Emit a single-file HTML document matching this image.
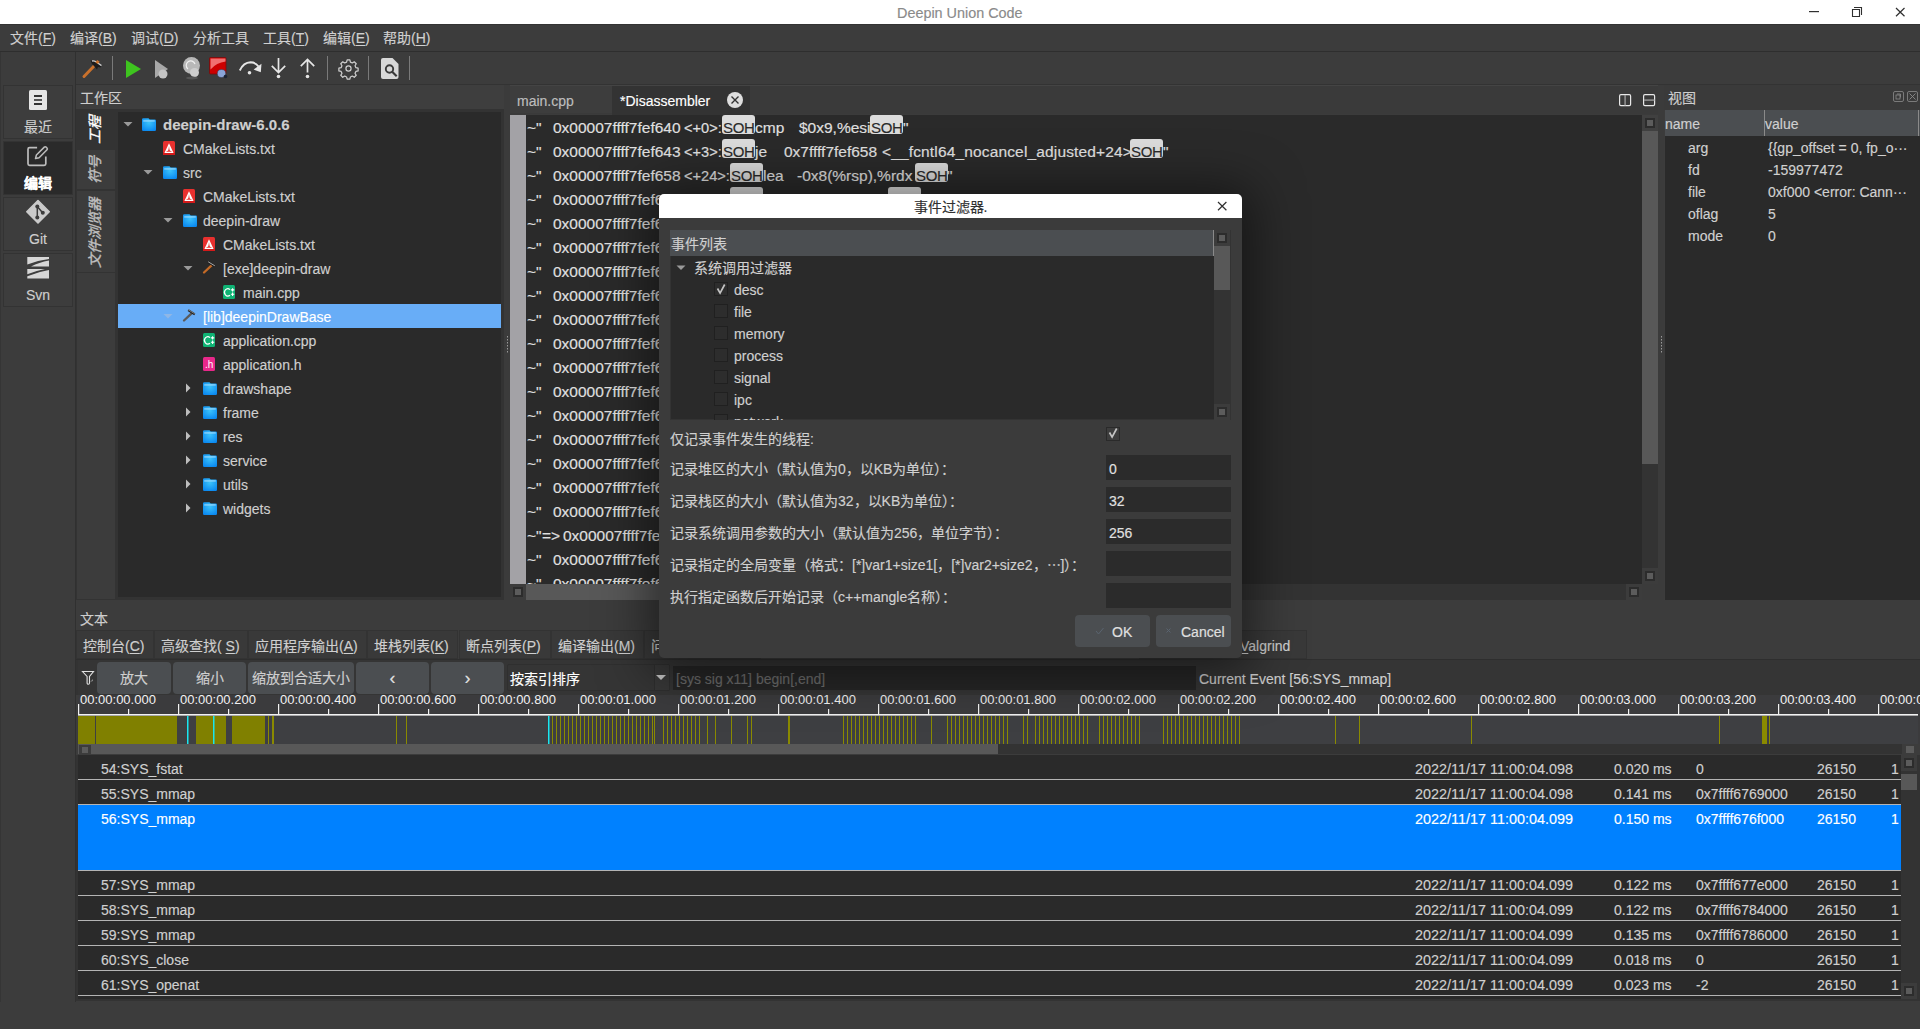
<!DOCTYPE html><html lang="zh-CN"><head><meta charset="utf-8"><style>
*{margin:0;padding:0;box-sizing:border-box}
html,body{width:1920px;height:1029px;overflow:hidden}
body{position:relative;background:#3c3c3c;font-family:"Liberation Sans",sans-serif;font-size:14px;color:#c9c9c9}
div,span{position:absolute}
.t{white-space:pre;line-height:20px;height:20px;-webkit-text-stroke:0.15px currentColor}
.u{text-decoration:underline;text-underline-offset:2px}
svg{position:absolute;overflow:visible}
</style></head><body>
<div style="left:0px;top:0px;width:1920px;height:24px;background:#fff"></div>
<div class="t" style="left:897px;top:3px;color:#8a8a8a;font-size:14.4px">Deepin Union Code</div>
<svg style="left:0;top:0" width="1920" height="24"><rect x="1809" y="11" width="10" height="1.2" fill="#303030"/><path d="M1852.5 9.5h7v7h-7z" fill="none" stroke="#303030" stroke-width="1.1"/><path d="M1854 7.5h7.5v7.5" fill="none" stroke="#303030" stroke-width="1.1"/><path d="M1896 8l8.5 8.3M1904.5 8l-8.5 8.3" stroke="#303030" stroke-width="1.2"/></svg>
<div style="left:0px;top:24px;width:1920px;height:27px;background:#3c3c3c"></div>
<div style="left:0px;top:24px;width:1920px;height:1px;background:#333"></div>
<div style="left:0px;top:51px;width:1920px;height:1px;background:#2e2e2e"></div>
<div class="t" style="left:10px;top:28.299999999999997px;color:#d0d0d0">文件(<span class=u style='position:static'>F</span>)</div>
<div class="t" style="left:70px;top:28.299999999999997px;color:#d0d0d0">编译(<span class=u style='position:static'>B</span>)</div>
<div class="t" style="left:131px;top:28.299999999999997px;color:#d0d0d0">调试(<span class=u style='position:static'>D</span>)</div>
<div class="t" style="left:193px;top:28.299999999999997px;color:#d0d0d0">分析工具</div>
<div class="t" style="left:263px;top:28.299999999999997px;color:#d0d0d0">工具(<span class=u style='position:static'>T</span>)</div>
<div class="t" style="left:323px;top:28.299999999999997px;color:#d0d0d0">编辑(<span class=u style='position:static'>E</span>)</div>
<div class="t" style="left:383px;top:28.299999999999997px;color:#d0d0d0">帮助(<span class=u style='position:static'>H</span>)</div>
<div style="left:0px;top:52px;width:76px;height:977px;background:#3c3c3c"></div>
<div style="left:0px;top:52px;width:1px;height:950px;background:#353535"></div>
<div style="left:75px;top:52px;width:1px;height:950px;background:#303030"></div>
<div style="left:3px;top:85px;width:70px;height:54px;background:#3d3d3d;border:1px solid #333"></div>
<div class="t" style="left:3px;top:117px;width:70px;text-align:center;color:#cfcfcf;">最近</div>
<div style="left:3px;top:141px;width:70px;height:54px;background:#2a2a2a;border:1px solid #333"></div>
<div class="t" style="left:3px;top:173px;width:70px;text-align:center;color:#ffffff;font-weight:bold">编辑</div>
<div style="left:3px;top:197px;width:70px;height:54px;background:#3d3d3d;border:1px solid #333"></div>
<div class="t" style="left:3px;top:229px;width:70px;text-align:center;color:#cfcfcf;">Git</div>
<div style="left:3px;top:253px;width:70px;height:54px;background:#3d3d3d;border:1px solid #333"></div>
<div class="t" style="left:3px;top:285px;width:70px;text-align:center;color:#cfcfcf;">Svn</div>
<svg style="left:0;top:0" width="76" height="320"><rect x="29" y="90" width="18" height="20" rx="1.5" fill="#e6e6e6"/><rect x="34" y="95" width="8" height="2" fill="#333"/><rect x="34" y="99" width="8" height="2" fill="#555"/><rect x="34" y="103" width="8" height="2" fill="#333"/><path d="M45.8 156.5v7.3a1.6 1.6 0 0 1-1.6 1.6h-14.6a1.6 1.6 0 0 1-1.6-1.6v-14.6a1.6 1.6 0 0 1 1.6-1.6h7.5" fill="none" stroke="#bdbdbd" stroke-width="1.7"/><path d="M35.5 158.6l.9-3.6 7.9-7.9a1.3 1.3 0 0 1 1.8 0l.9.9a1.3 1.3 0 0 1 0 1.8l-7.9 7.9z" fill="none" stroke="#bdbdbd" stroke-width="1.5" stroke-linejoin="round"/><path d="M38 200.5l11.2 11.2-11.2 11.2-11.2-11.2z" fill="#cacaca" stroke="#cacaca" stroke-width="1.6" stroke-linejoin="round"/><path d="M37.3 206.5l5.3 6.3M37.3 206.5v11" stroke="#3c3c3c" stroke-width="1.5" fill="none"/><circle cx="37.3" cy="206.5" r="2" fill="#3c3c3c"/><circle cx="42.8" cy="212.8" r="2" fill="#3c3c3c"/><circle cx="37.3" cy="217.5" r="2" fill="#3c3c3c"/><path d="M27.3 257h21.7v2q-11 1-21.7 5.5z" fill="#d6d6d6"/><path d="M31 266.6q8-4.5 18-6.2v6.2z" fill="#d6d6d6"/><path d="M27.3 269h17.7q-9 1.8-17.7 5.2z" fill="#d6d6d6"/><path d="M27.3 278.5v-2.2q11-4.5 21.7-6.2v8.4z" fill="#d6d6d6"/></svg>
<div style="left:76px;top:52px;width:1844px;height:32px;background:#3c3c3c"></div>
<div style="left:76px;top:84px;width:1844px;height:1px;background:#333"></div>
<svg style="left:0;top:0" width="420" height="90"><rect x="112" y="56" width="1" height="24" fill="#7a7a7a"/><rect x="327" y="56" width="1" height="24" fill="#7a7a7a"/><rect x="368" y="56" width="1" height="24" fill="#7a7a7a"/><rect x="409" y="56" width="1" height="24" fill="#7a7a7a"/><path d="M84 76.5l11.5-12" stroke="#c9712c" stroke-width="3" stroke-linecap="round"/><path d="M90.5 60.5q2.5-1 5 .5l6.5 4.5-1.5 2-2.5-.5-1 2.5-3-3.5-2-2z" fill="#1c1c1c"/><path d="M92 61q2-.5 4 .8l5.5 3.8" fill="none" stroke="#cfcfcf" stroke-width="1.3"/><rect x="96" y="60.5" width="3" height="3" fill="#c9712c" transform="rotate(40 97.5 62)"/><path d="M126 60l15 9-15 9z" fill="#3ec41f"/><path d="M155 60l13 9-13 9z" fill="#a8a8a8"/><circle cx="163" cy="74" r="4.5" fill="#c4c4c4"/><circle cx="191.5" cy="65.5" r="8.5" fill="#b8b8b8"/><path d="M188 69a4.5 4.5 0 1 1 7-5" fill="none" stroke="#f0f0f0" stroke-width="1.2"/><ellipse cx="194.5" cy="72.5" rx="4.5" ry="4.5" fill="#cdcdcd"/><ellipse cx="192" cy="78" rx="6" ry="1.5" fill="#555"/><rect x="209.5" y="57.5" width="16.5" height="16.5" rx="1" fill="#cc0000" stroke="#7a0a0a" stroke-width="0.8"/><path d="M210.5 58.5h15v3q-9 1-15 8z" fill="#f07070"/><ellipse cx="221.5" cy="73.5" rx="4.2" ry="4" fill="#8aa4d8" stroke="#334" stroke-width="0.5"/><circle cx="225.5" cy="76.5" r="1.8" fill="#1c2433"/><path d="M239.8 70.5Q243.5 62.5 250.5 62.3Q255.5 62.3 258.5 66.5" fill="none" stroke="#e6e6e6" stroke-width="1.9"/><path d="M261.5 63.8L260.8 72.3 253.6 69.6z" fill="#e6e6e6"/><circle cx="249.5" cy="72.8" r="1.8" fill="#e6e6e6"/><path d="M278.5 58v14M271.8 65.8l6.7 6.7 6.7-6.7" fill="none" stroke="#e6e6e6" stroke-width="1.7"/><circle cx="278.5" cy="76.5" r="1.8" fill="#e6e6e6"/><path d="M307.5 72.5v-13M300.8 66.2l6.7-6.7 6.7 6.7" fill="none" stroke="#e6e6e6" stroke-width="1.7"/><circle cx="307.5" cy="76.5" r="1.8" fill="#e6e6e6"/><g transform="translate(348.5 68.5) scale(0.86)"><path d="M-1.6 -10h3.2l.6 2.6 2.2 1 2.3-1.4 2.3 2.3-1.4 2.3 1 2.2 2.6.6v3.2l-2.6.6-1 2.2 1.4 2.3-2.3 2.3-2.3-1.4-2.2 1-.6 2.6h-3.2l-.6-2.6-2.2-1-2.3 1.4-2.3-2.3 1.4-2.3-1-2.2-2.6-.6v-3.2l2.6-.6 1-2.2-1.4-2.3 2.3-2.3 2.3 1.4 2.2-1z" fill="none" stroke="#d0d0d0" stroke-width="1.4" stroke-linejoin="round"/><circle r="3" fill="none" stroke="#d0d0d0" stroke-width="1.4"/></g><path d="M383 58h9.5l6 6V77a2 2 0 0 1-2 2H383a2 2 0 0 1-2-2V60a2 2 0 0 1 2-2z" fill="#d8d8d8"/><circle cx="389.5" cy="69" r="3.7" fill="none" stroke="#3a3a3a" stroke-width="1.9"/><path d="M392.2 71.7l4.5 4.5" stroke="#3a3a3a" stroke-width="2.1"/></svg>
<div style="left:76px;top:85px;width:428px;height:24px;background:#3e3e3e"></div>
<div class="t" style="left:80px;top:88px;color:#cfcfcf">工作区</div>
<div style="left:76px;top:109px;width:428px;height:491px;background:#333"></div>
<div style="left:77px;top:273px;width:38px;height:326px;background:#3c3c3c"></div>
<div style="left:77px;top:111px;width:38px;height:37px;background:#333"></div>
<div style="left:77px;top:150px;width:38px;height:39px;background:#3c3c3c"></div>
<div style="left:77px;top:191px;width:38px;height:81px;background:#3c3c3c"></div>
<div class="t" style="left:45px;top:120px;width:100px;text-align:center;transform:rotate(-90deg) skewX(-4deg);font-style:italic;-webkit-text-stroke:0.35px #ffffff;color:#ffffff">工程</div>
<div class="t" style="left:45px;top:160px;width:100px;text-align:center;transform:rotate(-90deg) skewX(-4deg);font-style:italic;-webkit-text-stroke:0.35px #c0c0c0;color:#c0c0c0">符号</div>
<div class="t" style="left:45px;top:223px;width:100px;text-align:center;transform:rotate(-90deg) skewX(-4deg);font-style:italic;-webkit-text-stroke:0.35px #c0c0c0;color:#c0c0c0">文件浏览器</div>
<div style="left:118px;top:112px;width:383px;height:485px;background:#2a2a2a"></div>
<div style="left:118px;top:304px;width:383px;height:24px;background:#68adf7"></div>
<div class="t" style="left:163px;top:115px;color:#cfcfcf;font-weight:bold;font-size:15px;">deepin-draw-6.0.6</div>
<div class="t" style="left:183px;top:139px;color:#cfcfcf;">CMakeLists.txt</div>
<div class="t" style="left:183px;top:163px;color:#cfcfcf;">src</div>
<div class="t" style="left:203px;top:187px;color:#cfcfcf;">CMakeLists.txt</div>
<div class="t" style="left:203px;top:211px;color:#cfcfcf;">deepin-draw</div>
<div class="t" style="left:223px;top:235px;color:#cfcfcf;">CMakeLists.txt</div>
<div class="t" style="left:223px;top:259px;color:#cfcfcf;">[exe]deepin-draw</div>
<div class="t" style="left:243px;top:283px;color:#cfcfcf;">main.cpp</div>
<div class="t" style="left:203px;top:307px;color:#ffffff;">[lib]deepinDrawBase</div>
<div class="t" style="left:223px;top:331px;color:#cfcfcf;">application.cpp</div>
<div class="t" style="left:223px;top:355px;color:#cfcfcf;">application.h</div>
<div class="t" style="left:223px;top:379px;color:#cfcfcf;">drawshape</div>
<div class="t" style="left:223px;top:403px;color:#cfcfcf;">frame</div>
<div class="t" style="left:223px;top:427px;color:#cfcfcf;">res</div>
<div class="t" style="left:223px;top:451px;color:#cfcfcf;">service</div>
<div class="t" style="left:223px;top:475px;color:#cfcfcf;">utils</div>
<div class="t" style="left:223px;top:499px;color:#cfcfcf;">widgets</div>
<svg style="left:0;top:0" width="520" height="600"><defs><radialGradient id="fg" cx="50%" cy="35%" r="70%"><stop offset="0" stop-color="#3cc3fa"/><stop offset="1" stop-color="#0a88f0"/></radialGradient></defs><path d="M123.5 122h9l-4.5 4.5z" fill="#9a9a9a"/><path d="M142 119.5a1.3 1.3 0 0 1 1.3-1.3h5.2l1.2 1.2h5a1.3 1.3 0 0 1 1.3 1.3v9a1.3 1.3 0 0 1-1.3 1.3h-11.4a1.3 1.3 0 0 1-1.3-1.3z" fill="url(#fg)"/><rect x="143.2" y="120.5" width="11.6" height="0.9" fill="#bfe8ff"/><rect x="163" y="141" width="12" height="14" rx="1.5" fill="#e8302e"/><rect x="163" y="152.5" width="12" height="2.5" fill="#d41a1a"/><path d="M169 143.3l4.6 9.6h-9.2z" fill="#fff"/><path d="M169 146q.4 3.5 .8 4.5l2.3 1.3h-6.2l2.3-1.3q.4-1 .8-4.5z" fill="#e8302e"/><path d="M143.5 170h9l-4.5 4.5z" fill="#9a9a9a"/><path d="M163 167.5a1.3 1.3 0 0 1 1.3-1.3h5.2l1.2 1.2h5a1.3 1.3 0 0 1 1.3 1.3v9a1.3 1.3 0 0 1-1.3 1.3h-11.4a1.3 1.3 0 0 1-1.3-1.3z" fill="url(#fg)"/><rect x="164.2" y="168.5" width="11.6" height="0.9" fill="#bfe8ff"/><rect x="183" y="189" width="12" height="14" rx="1.5" fill="#e8302e"/><rect x="183" y="200.5" width="12" height="2.5" fill="#d41a1a"/><path d="M189 191.3l4.6 9.6h-9.2z" fill="#fff"/><path d="M189 194q.4 3.5 .8 4.5l2.3 1.3h-6.2l2.3-1.3q.4-1 .8-4.5z" fill="#e8302e"/><path d="M163.5 218h9l-4.5 4.5z" fill="#9a9a9a"/><path d="M183 215.5a1.3 1.3 0 0 1 1.3-1.3h5.2l1.2 1.2h5a1.3 1.3 0 0 1 1.3 1.3v9a1.3 1.3 0 0 1-1.3 1.3h-11.4a1.3 1.3 0 0 1-1.3-1.3z" fill="url(#fg)"/><rect x="184.2" y="216.5" width="11.6" height="0.9" fill="#bfe8ff"/><rect x="203" y="237" width="12" height="14" rx="1.5" fill="#e8302e"/><rect x="203" y="248.5" width="12" height="2.5" fill="#d41a1a"/><path d="M209 239.3l4.6 9.6h-9.2z" fill="#fff"/><path d="M209 242q.4 3.5 .8 4.5l2.3 1.3h-6.2l2.3-1.3q.4-1 .8-4.5z" fill="#e8302e"/><path d="M183.5 266h9l-4.5 4.5z" fill="#9a9a9a"/><path d="M204 272.5l7.6-7.2" stroke="#c46a26" stroke-width="2.3" stroke-linecap="round"/><path d="M208.2 262.2l6.6 4.2" stroke="#1e1e1e" stroke-width="2"/><path d="M208.2 261.8l6.6 4" stroke="#bdbdbd" stroke-width="0.9"/><rect x="223" y="285" width="12" height="14" rx="1.5" fill="#0fb374"/><path d="M230 289.6a3.4 3.6 0 1 0 0 5.6" fill="none" stroke="#fff" stroke-width="1.2"/><path d="M232.6 288.2v3.4M230.9 289.9h3.4M232.6 292.6v3.4M230.9 294.3h3.4" stroke="#fff" stroke-width="1.1"/><path d="M163.5 314h9l-4.5 4.5z" fill="#8fb7e6"/><path d="M184 320.5l7.6-7.2" stroke="#5a5a5a" stroke-width="2.3" stroke-linecap="round"/><path d="M188.2 310.2l6.6 4.2" stroke="#1e1e1e" stroke-width="2"/><path d="M188.2 309.8l6.6 4" stroke="#8a8a8a" stroke-width="0.9"/><rect x="203" y="333" width="12" height="14" rx="1.5" fill="#0fb374"/><path d="M210 337.6a3.4 3.6 0 1 0 0 5.6" fill="none" stroke="#fff" stroke-width="1.2"/><path d="M212.6 336.2v3.4M210.9 337.9h3.4M212.6 340.6v3.4M210.9 342.3h3.4" stroke="#fff" stroke-width="1.1"/><rect x="203" y="357" width="12" height="14" rx="1.5" fill="#e8288a"/><text x="205" y="368" font-family="Liberation Sans" font-size="10" fill="#fff">.h</text><path d="M186 383.5v9l4.5-4.5z" fill="#bdbdbd"/><path d="M203 383.5a1.3 1.3 0 0 1 1.3-1.3h5.2l1.2 1.2h5a1.3 1.3 0 0 1 1.3 1.3v9a1.3 1.3 0 0 1-1.3 1.3h-11.4a1.3 1.3 0 0 1-1.3-1.3z" fill="url(#fg)"/><rect x="204.2" y="384.5" width="11.6" height="0.9" fill="#bfe8ff"/><path d="M186 407.5v9l4.5-4.5z" fill="#bdbdbd"/><path d="M203 407.5a1.3 1.3 0 0 1 1.3-1.3h5.2l1.2 1.2h5a1.3 1.3 0 0 1 1.3 1.3v9a1.3 1.3 0 0 1-1.3 1.3h-11.4a1.3 1.3 0 0 1-1.3-1.3z" fill="url(#fg)"/><rect x="204.2" y="408.5" width="11.6" height="0.9" fill="#bfe8ff"/><path d="M186 431.5v9l4.5-4.5z" fill="#bdbdbd"/><path d="M203 431.5a1.3 1.3 0 0 1 1.3-1.3h5.2l1.2 1.2h5a1.3 1.3 0 0 1 1.3 1.3v9a1.3 1.3 0 0 1-1.3 1.3h-11.4a1.3 1.3 0 0 1-1.3-1.3z" fill="url(#fg)"/><rect x="204.2" y="432.5" width="11.6" height="0.9" fill="#bfe8ff"/><path d="M186 455.5v9l4.5-4.5z" fill="#bdbdbd"/><path d="M203 455.5a1.3 1.3 0 0 1 1.3-1.3h5.2l1.2 1.2h5a1.3 1.3 0 0 1 1.3 1.3v9a1.3 1.3 0 0 1-1.3 1.3h-11.4a1.3 1.3 0 0 1-1.3-1.3z" fill="url(#fg)"/><rect x="204.2" y="456.5" width="11.6" height="0.9" fill="#bfe8ff"/><path d="M186 479.5v9l4.5-4.5z" fill="#bdbdbd"/><path d="M203 479.5a1.3 1.3 0 0 1 1.3-1.3h5.2l1.2 1.2h5a1.3 1.3 0 0 1 1.3 1.3v9a1.3 1.3 0 0 1-1.3 1.3h-11.4a1.3 1.3 0 0 1-1.3-1.3z" fill="url(#fg)"/><rect x="204.2" y="480.5" width="11.6" height="0.9" fill="#bfe8ff"/><path d="M186 503.5v9l4.5-4.5z" fill="#bdbdbd"/><path d="M203 503.5a1.3 1.3 0 0 1 1.3-1.3h5.2l1.2 1.2h5a1.3 1.3 0 0 1 1.3 1.3v9a1.3 1.3 0 0 1-1.3 1.3h-11.4a1.3 1.3 0 0 1-1.3-1.3z" fill="url(#fg)"/><rect x="204.2" y="504.5" width="11.6" height="0.9" fill="#bfe8ff"/></svg>
<div style="left:504px;top:85px;width:1160px;height:515px;background:#3b3b3b"></div>
<div style="left:510px;top:85px;width:1148px;height:29px;background:#3a3a3a;border-top:1px solid #444"></div>
<div style="left:510px;top:86px;width:102px;height:27px;background:#3d3d3d"></div>
<div class="t" style="left:517px;top:91px;color:#bdbdbd">main.cpp</div>
<div style="left:612px;top:86px;width:138px;height:29px;background:#333"></div>
<div class="t" style="left:620px;top:91px;color:#ffffff">*Disassembler</div>
<svg style="left:0;top:0" width="1920" height="120"><circle cx="735" cy="100" r="8" fill="#dedede"/><path d="M731.5 96.5l7 7M738.5 96.5l-7 7" stroke="#333" stroke-width="1.4"/><rect x="1619.6" y="94.6" width="11" height="11" rx="1.3" fill="none" stroke="#e8e8e8" stroke-width="1.2"/><rect x="1624.4" y="95" width="1.4" height="10.5" fill="#9a9a9a"/><rect x="1643.6" y="94.6" width="11" height="11" rx="1.3" fill="none" stroke="#e8e8e8" stroke-width="1.2"/><rect x="1644" y="99.4" width="10.5" height="1.4" fill="#9a9a9a"/></svg>
<div style="left:510px;top:115px;width:1132px;height:469px;background:#2a2a2a;overflow:hidden"></div>
<div style="left:510px;top:115px;width:16px;height:469px;background:#a3a2a6"></div>
<div style="left:1642px;top:115px;width:16px;height:469px;background:#333"></div>
<div style="left:1642px;top:115px;width:16px;height:16px;background:#404040"></div>
<div style="left:1645px;top:118px;width:10px;height:10px;background:#2c2c2c"></div>
<div style="left:1647px;top:120px;width:6px;height:6px;background:#5c5c5c"></div>
<div style="left:1642px;top:131px;width:16px;height:333px;background:#585858"></div>
<div style="left:1642px;top:568px;width:16px;height:16px;background:#3c3c3c"></div>
<div style="left:1645px;top:571px;width:10px;height:10px;background:#2c2c2c"></div>
<div style="left:1647px;top:573px;width:6px;height:6px;background:#5c5c5c"></div>
<div style="left:510px;top:584px;width:1132px;height:16px;background:#333"></div>
<div style="left:510px;top:584px;width:16px;height:16px;background:#3c3c3c"></div>
<div style="left:513px;top:587px;width:10px;height:10px;background:#2c2c2c"></div>
<div style="left:515px;top:589px;width:6px;height:6px;background:#5c5c5c"></div>
<div style="left:526px;top:584px;width:640px;height:16px;background:#585858"></div>
<div style="left:1626px;top:584px;width:16px;height:16px;background:#3c3c3c"></div>
<div style="left:1629px;top:587px;width:10px;height:10px;background:#2c2c2c"></div>
<div style="left:1631px;top:589px;width:6px;height:6px;background:#5c5c5c"></div>
<div style="left:510px;top:115px;width:1132px;height:469px;overflow:hidden"><div style="left:-510px;top:-115px;width:1642px;height:584px"><div class="t" style="left:527px;top:118px;color:#e0e0e0;font-size:15.5px">~"</div><div class="t" style="left:553px;top:118px;color:#e0e0e0;font-size:15.5px">0x00007ffff7fef640</div><div class="t" style="left:527px;top:142px;color:#e0e0e0;font-size:15.5px">~"</div><div class="t" style="left:553px;top:142px;color:#e0e0e0;font-size:15.5px">0x00007ffff7fef643</div><div class="t" style="left:527px;top:166px;color:#e0e0e0;font-size:15.5px">~"</div><div class="t" style="left:553px;top:166px;color:#e0e0e0;font-size:15.5px">0x00007ffff7fef658</div><div class="t" style="left:527px;top:190px;color:#e0e0e0;font-size:15.5px">~"</div><div class="t" style="left:553px;top:190px;color:#e0e0e0;font-size:15.5px">0x00007ffff7fef65b</div><div class="t" style="left:527px;top:214px;color:#e0e0e0;font-size:15.5px">~"</div><div class="t" style="left:553px;top:214px;color:#e0e0e0;font-size:15.5px">0x00007ffff7fef65f</div><div class="t" style="left:527px;top:238px;color:#e0e0e0;font-size:15.5px">~"</div><div class="t" style="left:553px;top:238px;color:#e0e0e0;font-size:15.5px">0x00007ffff7fef663</div><div class="t" style="left:527px;top:262px;color:#e0e0e0;font-size:15.5px">~"</div><div class="t" style="left:553px;top:262px;color:#e0e0e0;font-size:15.5px">0x00007ffff7fef667</div><div class="t" style="left:527px;top:286px;color:#e0e0e0;font-size:15.5px">~"</div><div class="t" style="left:553px;top:286px;color:#e0e0e0;font-size:15.5px">0x00007ffff7fef66b</div><div class="t" style="left:527px;top:310px;color:#e0e0e0;font-size:15.5px">~"</div><div class="t" style="left:553px;top:310px;color:#e0e0e0;font-size:15.5px">0x00007ffff7fef66c</div><div class="t" style="left:527px;top:334px;color:#e0e0e0;font-size:15.5px">~"</div><div class="t" style="left:553px;top:334px;color:#e0e0e0;font-size:15.5px">0x00007ffff7fef66e</div><div class="t" style="left:527px;top:358px;color:#e0e0e0;font-size:15.5px">~"</div><div class="t" style="left:553px;top:358px;color:#e0e0e0;font-size:15.5px">0x00007ffff7fef672</div><div class="t" style="left:527px;top:382px;color:#e0e0e0;font-size:15.5px">~"</div><div class="t" style="left:553px;top:382px;color:#e0e0e0;font-size:15.5px">0x00007ffff7fef676</div><div class="t" style="left:527px;top:406px;color:#e0e0e0;font-size:15.5px">~"</div><div class="t" style="left:553px;top:406px;color:#e0e0e0;font-size:15.5px">0x00007ffff7fef67a</div><div class="t" style="left:527px;top:430px;color:#e0e0e0;font-size:15.5px">~"</div><div class="t" style="left:553px;top:430px;color:#e0e0e0;font-size:15.5px">0x00007ffff7fef67e</div><div class="t" style="left:527px;top:454px;color:#e0e0e0;font-size:15.5px">~"</div><div class="t" style="left:553px;top:454px;color:#e0e0e0;font-size:15.5px">0x00007ffff7fef682</div><div class="t" style="left:527px;top:478px;color:#e0e0e0;font-size:15.5px">~"</div><div class="t" style="left:553px;top:478px;color:#e0e0e0;font-size:15.5px">0x00007ffff7fef686</div><div class="t" style="left:527px;top:502px;color:#e0e0e0;font-size:15.5px">~"</div><div class="t" style="left:553px;top:502px;color:#e0e0e0;font-size:15.5px">0x00007ffff7fef68a</div><div class="t" style="left:527px;top:526px;color:#e0e0e0;font-size:15.5px">~"</div><div class="t" style="left:542px;top:526px;color:#e0e0e0;font-size:15.5px">=&gt;</div><div class="t" style="left:563px;top:526px;color:#e0e0e0;font-size:15.5px">0x00007ffff7fef66c</div><div class="t" style="left:527px;top:550px;color:#e0e0e0;font-size:15.5px">~"</div><div class="t" style="left:553px;top:550px;color:#e0e0e0;font-size:15.5px">0x00007ffff7fef690</div><div class="t" style="left:527px;top:574px;color:#e0e0e0;font-size:15.5px">~"</div><div class="t" style="left:553px;top:574px;color:#e0e0e0;font-size:15.5px">0x00007ffff7fef694</div><div class="t" style="left:684px;top:118px;color:#e0e0e0;font-size:15.5px;font-size:14.6px">&lt;+0&gt;:</div><div class="t" style="left:684px;top:142px;color:#e0e0e0;font-size:15.5px;font-size:14.6px">&lt;+3&gt;:</div><div class="t" style="left:684px;top:166px;color:#e0e0e0;font-size:15.5px;font-size:14.6px">&lt;+24&gt;:</div><div style="left:722px;top:115px;width:33px;height:19px;background:#dcdcdc;border-radius:3px"></div><div class="t" style="left:723px;top:118px;color:#2a2a2a;font-size:15px;letter-spacing:-0.3px">SOH</div><div class="t" style="left:755px;top:118px;color:#e0e0e0;font-size:15.5px">cmp</div><div class="t" style="left:799px;top:118px;color:#e0e0e0;font-size:15.5px">$0x9,%esi</div><div style="left:870px;top:115px;width:33px;height:19px;background:#dcdcdc;border-radius:3px"></div><div class="t" style="left:871px;top:118px;color:#2a2a2a;font-size:15px;letter-spacing:-0.3px">SOH</div><div class="t" style="left:903px;top:118px;color:#e0e0e0;font-size:15.5px">"</div><div style="left:722px;top:139px;width:33px;height:19px;background:#dcdcdc;border-radius:3px"></div><div class="t" style="left:723px;top:142px;color:#2a2a2a;font-size:15px;letter-spacing:-0.3px">SOH</div><div class="t" style="left:755px;top:142px;color:#e0e0e0;font-size:15.5px">je</div><div class="t" style="left:784px;top:142px;color:#e0e0e0;font-size:15.5px">0x7ffff7fef658</div><div class="t" style="left:882px;top:142px;color:#e0e0e0;font-size:15.5px;letter-spacing:0.15px">&lt;__fcntl64_nocancel_adjusted+24&gt;</div><div style="left:1130px;top:139px;width:33px;height:19px;background:#dcdcdc;border-radius:3px"></div><div class="t" style="left:1131px;top:142px;color:#2a2a2a;font-size:15px;letter-spacing:-0.3px">SOH</div><div class="t" style="left:1163px;top:142px;color:#e0e0e0;font-size:15.5px">"</div><div style="left:730px;top:163px;width:33px;height:19px;background:#dcdcdc;border-radius:3px"></div><div class="t" style="left:731px;top:166px;color:#2a2a2a;font-size:15px;letter-spacing:-0.3px">SOH</div><div class="t" style="left:763px;top:166px;color:#e0e0e0;font-size:15.5px">lea</div><div class="t" style="left:797px;top:166px;color:#e0e0e0;font-size:15.5px">-0x8(%rsp),%rdx</div><div style="left:915px;top:163px;width:33px;height:19px;background:#dcdcdc;border-radius:3px"></div><div class="t" style="left:916px;top:166px;color:#2a2a2a;font-size:15px;letter-spacing:-0.3px">SOH</div><div class="t" style="left:947px;top:166px;color:#e0e0e0;font-size:15.5px">"</div><div style="left:730px;top:187px;width:33px;height:19px;background:#dcdcdc;border-radius:3px"></div><div class="t" style="left:731px;top:190px;color:#2a2a2a;font-size:15px;letter-spacing:-0.3px">SOH</div><div style="left:888px;top:187px;width:33px;height:19px;background:#dcdcdc;border-radius:3px"></div><div class="t" style="left:889px;top:190px;color:#2a2a2a;font-size:15px;letter-spacing:-0.3px">SOH</div><div class="t" style="left:921px;top:190px;color:#e0e0e0;font-size:15.5px">"</div><div class="t" style="left:810px;top:190px;color:#e0e0e0;font-size:15.5px">l</div></div></div>
<svg style="left:0;top:0" width="1920" height="600"><rect x="507" y="336" width="1" height="1.5" fill="#9a9a9a"/><rect x="507" y="339" width="1" height="1.5" fill="#9a9a9a"/><rect x="507" y="342" width="1" height="1.5" fill="#9a9a9a"/><rect x="507" y="345" width="1" height="1.5" fill="#9a9a9a"/><rect x="507" y="348" width="1" height="1.5" fill="#9a9a9a"/><rect x="507" y="351" width="1" height="1.5" fill="#9a9a9a"/><rect x="1661" y="336" width="1" height="1.5" fill="#9a9a9a"/><rect x="1661" y="339" width="1" height="1.5" fill="#9a9a9a"/><rect x="1661" y="342" width="1" height="1.5" fill="#9a9a9a"/><rect x="1661" y="345" width="1" height="1.5" fill="#9a9a9a"/><rect x="1661" y="348" width="1" height="1.5" fill="#9a9a9a"/><rect x="1661" y="351" width="1" height="1.5" fill="#9a9a9a"/></svg>
<div style="left:1664px;top:85px;width:256px;height:515px;background:#3c3c3c"></div>
<div style="left:1664px;top:85px;width:256px;height:25px;background:#3a3a3a"></div>
<div class="t" style="left:1668px;top:88px;color:#cfcfcf">视图</div>
<svg style="left:0;top:0" width="1920" height="120"><rect x="1893.5" y="91.5" width="10" height="10" rx="1.5" fill="none" stroke="#8a8a8a" stroke-width="0.8"/><rect x="1896" y="95" width="4" height="4" fill="none" stroke="#8a8a8a" stroke-width="0.8"/><path d="M1897 94h3.5v3.5" fill="none" stroke="#8a8a8a" stroke-width="0.8"/><rect x="1907.5" y="91.5" width="10" height="10" rx="1.5" fill="none" stroke="#8a8a8a" stroke-width="0.8"/><path d="M1909.5 93.5l6 6M1915.5 93.5l-6 6" stroke="#8a8a8a" stroke-width="0.9"/></svg>
<div style="left:1665px;top:110px;width:255px;height:490px;background:#2a2a2a"></div>
<div style="left:1665px;top:110px;width:255px;height:26px;background:#4b4e51"></div>
<div style="left:1764px;top:110px;width:1px;height:26px;background:#8a8a8a"></div>
<div style="left:1918px;top:110px;width:1px;height:26px;background:#8a8a8a"></div>
<div class="t" style="left:1665px;top:114px;color:#d0d0d0">name</div>
<div class="t" style="left:1765px;top:114px;color:#d0d0d0">value</div>
<div class="t" style="left:1688px;top:138px;color:#d0d0d0">arg</div>
<div class="t" style="left:1768px;top:138px;color:#d0d0d0">{{gp_offset = 0, fp_o···</div>
<div class="t" style="left:1688px;top:160px;color:#d0d0d0">fd</div>
<div class="t" style="left:1768px;top:160px;color:#d0d0d0">-159977472</div>
<div class="t" style="left:1688px;top:182px;color:#d0d0d0">file</div>
<div class="t" style="left:1768px;top:182px;color:#d0d0d0">0xf000 &lt;error: Cann···</div>
<div class="t" style="left:1688px;top:204px;color:#d0d0d0">oflag</div>
<div class="t" style="left:1768px;top:204px;color:#d0d0d0">5</div>
<div class="t" style="left:1688px;top:226px;color:#d0d0d0">mode</div>
<div class="t" style="left:1768px;top:226px;color:#d0d0d0">0</div>
<div style="left:76px;top:600px;width:1844px;height:31px;background:#3c3c3c"></div>
<div class="t" style="left:80px;top:609px;color:#cfcfcf">文本</div>
<div style="left:76px;top:631px;width:1844px;height:28px;background:#3c3c3c"></div>
<div style="left:76px;top:630px;width:78px;height:29px;background:#393939;border:1px solid #333"></div>
<div class="t" style="left:83px;top:636px;color:#cfcfcf">控制台(<span class=u style='position:static'>C</span>)</div>
<div style="left:154px;top:630px;width:94px;height:29px;background:#393939;border:1px solid #333"></div>
<div class="t" style="left:161px;top:636px;color:#cfcfcf">高级查找( <span class=u style='position:static'>S</span>)</div>
<div style="left:248px;top:630px;width:119px;height:29px;background:#393939;border:1px solid #333"></div>
<div class="t" style="left:255px;top:636px;color:#cfcfcf">应用程序输出(<span class=u style='position:static'>A</span>)</div>
<div style="left:367px;top:630px;width:91px;height:29px;background:#393939;border:1px solid #333"></div>
<div class="t" style="left:374px;top:636px;color:#cfcfcf">堆栈列表(<span class=u style='position:static'>K</span>)</div>
<div style="left:459px;top:630px;width:92px;height:29px;background:#393939;border:1px solid #333"></div>
<div class="t" style="left:466px;top:636px;color:#cfcfcf">断点列表(<span class=u style='position:static'>P</span>)</div>
<div style="left:551px;top:630px;width:93px;height:29px;background:#393939;border:1px solid #333"></div>
<div class="t" style="left:558px;top:636px;color:#cfcfcf">编译输出(<span class=u style='position:static'>M</span>)</div>
<div style="left:644px;top:630px;width:117px;height:29px;background:#393939;border:1px solid #333"></div>
<div class="t" style="left:651px;top:636px;color:#cfcfcf">问题</div>
<div style="left:1139px;top:630px;width:168px;height:29px;background:#393939;border:1px solid #333"></div>
<div class="t" style="left:1146px;top:636px;color:#cfcfcf"></div>
<div class="t" style="left:1240px;top:636px;color:#cfcfcf"><span class=u style='position:static'>V</span>algrind</div>
<div style="left:76px;top:659px;width:1844px;height:36px;background:#333"></div>
<div style="left:76px;top:659px;width:1844px;height:1px;background:#2e2e2e"></div>
<div style="left:78px;top:660px;width:1842px;height:35px;background:#353535"></div>
<svg style="left:0;top:0" width="100" height="700"><path d="M82.5 671.5h11l-4 5v6.5a1.2 1.2 0 0 1-2.4 0v-6.5z" fill="none" stroke="#e0e0e0" stroke-width="1.1"/><path d="M90 682l3-3v2z" fill="#888"/></svg>
<div style="left:97px;top:662px;width:74px;height:32px;background:#4b4e51;border-radius:4px"></div>
<div class="t" style="left:97px;top:668px;width:74px;text-align:center;color:#cfcfcf">放大</div>
<div style="left:173px;top:662px;width:73px;height:32px;background:#4b4e51;border-radius:4px"></div>
<div class="t" style="left:173px;top:668px;width:73px;text-align:center;color:#cfcfcf">缩小</div>
<div style="left:248px;top:662px;width:106px;height:32px;background:#4b4e51;border-radius:4px"></div>
<div class="t" style="left:248px;top:668px;width:106px;text-align:center;color:#cfcfcf">缩放到合适大小</div>
<div style="left:356px;top:662px;width:73px;height:32px;background:#4b4e51;border-radius:4px"></div>
<div class="t" style="left:356px;top:668px;width:73px;text-align:center;color:#e0e0e0;font-size:18px">‹</div>
<div style="left:431px;top:662px;width:73px;height:32px;background:#4b4e51;border-radius:4px"></div>
<div class="t" style="left:431px;top:668px;width:73px;text-align:center;color:#e0e0e0;font-size:18px">›</div>
<div style="left:507px;top:664px;width:163px;height:27px;background:#353535;border:1px solid #2f2f2f;border-radius:2px"></div>
<div style="left:655px;top:665px;width:14px;height:25px;background:#383838"></div>
<div style="left:654px;top:665px;width:1px;height:25px;background:#2e2e2e"></div>
<div class="t" style="left:510px;top:669px;color:#ffffff">按索引排序</div>
<svg style="left:0;top:0" width="700" height="700"><path d="M656 675h10l-5 5z" fill="#c8c8c8"/></svg>
<div style="left:673px;top:666px;width:523px;height:24px;background:#262626"></div>
<div class="t" style="left:676px;top:669px;color:#6c6c6c">[sys sig x11] begin[,end]</div>
<div class="t" style="left:1199px;top:669px;color:#cfcfcf">Current Event [56:SYS_mmap]</div>
<div style="left:78px;top:695px;width:1842px;height:49px;background:#3b3b3d"></div>
<svg style="left:0;top:0" width="1920" height="760"><rect x="78" y="714" width="1840" height="1.6" fill="#f2f2f2"/><rect x="78" y="704" width="1.2" height="10" fill="#f2f2f2"/><rect x="128" y="709" width="1.2" height="5" fill="#f2f2f2"/><text x="80" y="704" font-family="Liberation Sans" font-size="13" fill="#f2f2f2">00:00:00.000</text><rect x="178" y="704" width="1.2" height="10" fill="#f2f2f2"/><rect x="228" y="709" width="1.2" height="5" fill="#f2f2f2"/><text x="180" y="704" font-family="Liberation Sans" font-size="13" fill="#f2f2f2">00:00:00.200</text><rect x="278" y="704" width="1.2" height="10" fill="#f2f2f2"/><rect x="328" y="709" width="1.2" height="5" fill="#f2f2f2"/><text x="280" y="704" font-family="Liberation Sans" font-size="13" fill="#f2f2f2">00:00:00.400</text><rect x="378" y="704" width="1.2" height="10" fill="#f2f2f2"/><rect x="428" y="709" width="1.2" height="5" fill="#f2f2f2"/><text x="380" y="704" font-family="Liberation Sans" font-size="13" fill="#f2f2f2">00:00:00.600</text><rect x="478" y="704" width="1.2" height="10" fill="#f2f2f2"/><rect x="528" y="709" width="1.2" height="5" fill="#f2f2f2"/><text x="480" y="704" font-family="Liberation Sans" font-size="13" fill="#f2f2f2">00:00:00.800</text><rect x="578" y="704" width="1.2" height="10" fill="#f2f2f2"/><rect x="628" y="709" width="1.2" height="5" fill="#f2f2f2"/><text x="580" y="704" font-family="Liberation Sans" font-size="13" fill="#f2f2f2">00:00:01.000</text><rect x="678" y="704" width="1.2" height="10" fill="#f2f2f2"/><rect x="728" y="709" width="1.2" height="5" fill="#f2f2f2"/><text x="680" y="704" font-family="Liberation Sans" font-size="13" fill="#f2f2f2">00:00:01.200</text><rect x="778" y="704" width="1.2" height="10" fill="#f2f2f2"/><rect x="828" y="709" width="1.2" height="5" fill="#f2f2f2"/><text x="780" y="704" font-family="Liberation Sans" font-size="13" fill="#f2f2f2">00:00:01.400</text><rect x="878" y="704" width="1.2" height="10" fill="#f2f2f2"/><rect x="928" y="709" width="1.2" height="5" fill="#f2f2f2"/><text x="880" y="704" font-family="Liberation Sans" font-size="13" fill="#f2f2f2">00:00:01.600</text><rect x="978" y="704" width="1.2" height="10" fill="#f2f2f2"/><rect x="1028" y="709" width="1.2" height="5" fill="#f2f2f2"/><text x="980" y="704" font-family="Liberation Sans" font-size="13" fill="#f2f2f2">00:00:01.800</text><rect x="1078" y="704" width="1.2" height="10" fill="#f2f2f2"/><rect x="1128" y="709" width="1.2" height="5" fill="#f2f2f2"/><text x="1080" y="704" font-family="Liberation Sans" font-size="13" fill="#f2f2f2">00:00:02.000</text><rect x="1178" y="704" width="1.2" height="10" fill="#f2f2f2"/><rect x="1228" y="709" width="1.2" height="5" fill="#f2f2f2"/><text x="1180" y="704" font-family="Liberation Sans" font-size="13" fill="#f2f2f2">00:00:02.200</text><rect x="1278" y="704" width="1.2" height="10" fill="#f2f2f2"/><rect x="1328" y="709" width="1.2" height="5" fill="#f2f2f2"/><text x="1280" y="704" font-family="Liberation Sans" font-size="13" fill="#f2f2f2">00:00:02.400</text><rect x="1378" y="704" width="1.2" height="10" fill="#f2f2f2"/><rect x="1428" y="709" width="1.2" height="5" fill="#f2f2f2"/><text x="1380" y="704" font-family="Liberation Sans" font-size="13" fill="#f2f2f2">00:00:02.600</text><rect x="1478" y="704" width="1.2" height="10" fill="#f2f2f2"/><rect x="1528" y="709" width="1.2" height="5" fill="#f2f2f2"/><text x="1480" y="704" font-family="Liberation Sans" font-size="13" fill="#f2f2f2">00:00:02.800</text><rect x="1578" y="704" width="1.2" height="10" fill="#f2f2f2"/><rect x="1628" y="709" width="1.2" height="5" fill="#f2f2f2"/><text x="1580" y="704" font-family="Liberation Sans" font-size="13" fill="#f2f2f2">00:00:03.000</text><rect x="1678" y="704" width="1.2" height="10" fill="#f2f2f2"/><rect x="1728" y="709" width="1.2" height="5" fill="#f2f2f2"/><text x="1680" y="704" font-family="Liberation Sans" font-size="13" fill="#f2f2f2">00:00:03.200</text><rect x="1778" y="704" width="1.2" height="10" fill="#f2f2f2"/><rect x="1828" y="709" width="1.2" height="5" fill="#f2f2f2"/><text x="1780" y="704" font-family="Liberation Sans" font-size="13" fill="#f2f2f2">00:00:03.400</text><rect x="1878" y="704" width="1.2" height="10" fill="#f2f2f2"/><rect x="1928" y="709" width="1.2" height="5" fill="#f2f2f2"/><text x="1880" y="704" font-family="Liberation Sans" font-size="13" fill="#f2f2f2">00:00:03.600</text><rect x="78" y="716" width="1840" height="28" fill="#3e3f42"/><rect x="78" y="716" width="17" height="28" fill="#808000"/><rect x="96" y="716" width="81" height="28" fill="#808000"/><rect x="196" y="716" width="30" height="28" fill="#808000"/><rect x="232" y="716" width="33" height="28" fill="#808000"/><rect x="268" y="716" width="1" height="28" fill="#8a8a00"/><rect x="272" y="716" width="1" height="28" fill="#8a8a00"/><rect x="273" y="716" width="1" height="28" fill="#8a8a00"/><rect x="396" y="716" width="1" height="28" fill="#8a8a00"/><rect x="406" y="716" width="1" height="28" fill="#8a8a00"/><rect x="552" y="716" width="1" height="28" fill="#8a8a00"/><rect x="556" y="716" width="1" height="28" fill="#8a8a00"/><rect x="560" y="716" width="1" height="28" fill="#8a8a00"/><rect x="564" y="716" width="1" height="28" fill="#8a8a00"/><rect x="568" y="716" width="1" height="28" fill="#8a8a00"/><rect x="572" y="716" width="1" height="28" fill="#8a8a00"/><rect x="576" y="716" width="1" height="28" fill="#8a8a00"/><rect x="580" y="716" width="1" height="28" fill="#8a8a00"/><rect x="584" y="716" width="1" height="28" fill="#8a8a00"/><rect x="588" y="716" width="1" height="28" fill="#8a8a00"/><rect x="592" y="716" width="1" height="28" fill="#8a8a00"/><rect x="596" y="716" width="1" height="28" fill="#8a8a00"/><rect x="600" y="716" width="1" height="28" fill="#8a8a00"/><rect x="604" y="716" width="1" height="28" fill="#8a8a00"/><rect x="608" y="716" width="1" height="28" fill="#8a8a00"/><rect x="612" y="716" width="1" height="28" fill="#8a8a00"/><rect x="616" y="716" width="1" height="28" fill="#8a8a00"/><rect x="620" y="716" width="1" height="28" fill="#8a8a00"/><rect x="624" y="716" width="1" height="28" fill="#8a8a00"/><rect x="628" y="716" width="1" height="28" fill="#8a8a00"/><rect x="632" y="716" width="1" height="28" fill="#8a8a00"/><rect x="636" y="716" width="1" height="28" fill="#8a8a00"/><rect x="640" y="716" width="1" height="28" fill="#8a8a00"/><rect x="644" y="716" width="1" height="28" fill="#8a8a00"/><rect x="648" y="716" width="1" height="28" fill="#8a8a00"/><rect x="652" y="716" width="1" height="28" fill="#8a8a00"/><rect x="654" y="716" width="1" height="28" fill="#8a8a00"/><rect x="663" y="716" width="1" height="28" fill="#8a8a00"/><rect x="667" y="716" width="1" height="28" fill="#8a8a00"/><rect x="671" y="716" width="1" height="28" fill="#8a8a00"/><rect x="675" y="716" width="1" height="28" fill="#8a8a00"/><rect x="679" y="716" width="1" height="28" fill="#8a8a00"/><rect x="683" y="716" width="1" height="28" fill="#8a8a00"/><rect x="687" y="716" width="1" height="28" fill="#8a8a00"/><rect x="691" y="716" width="1" height="28" fill="#8a8a00"/><rect x="695" y="716" width="1" height="28" fill="#8a8a00"/><rect x="699" y="716" width="1" height="28" fill="#8a8a00"/><rect x="707" y="716" width="1" height="28" fill="#8a8a00"/><rect x="715" y="716" width="1" height="28" fill="#8a8a00"/><rect x="731" y="716" width="1" height="28" fill="#8a8a00"/><rect x="747" y="716" width="1" height="28" fill="#8a8a00"/><rect x="751" y="716" width="1" height="28" fill="#8a8a00"/><rect x="788" y="716" width="1" height="28" fill="#8a8a00"/><rect x="789" y="716" width="1" height="28" fill="#8a8a00"/><rect x="843" y="716" width="1" height="28" fill="#8a8a00"/><rect x="847" y="716" width="1" height="28" fill="#8a8a00"/><rect x="851" y="716" width="1" height="28" fill="#8a8a00"/><rect x="855" y="716" width="1" height="28" fill="#8a8a00"/><rect x="859" y="716" width="1" height="28" fill="#8a8a00"/><rect x="863" y="716" width="1" height="28" fill="#8a8a00"/><rect x="867" y="716" width="1" height="28" fill="#8a8a00"/><rect x="871" y="716" width="1" height="28" fill="#8a8a00"/><rect x="875" y="716" width="1" height="28" fill="#8a8a00"/><rect x="879" y="716" width="1" height="28" fill="#8a8a00"/><rect x="883" y="716" width="1" height="28" fill="#8a8a00"/><rect x="887" y="716" width="1" height="28" fill="#8a8a00"/><rect x="891" y="716" width="1" height="28" fill="#8a8a00"/><rect x="895" y="716" width="1" height="28" fill="#8a8a00"/><rect x="899" y="716" width="1" height="28" fill="#8a8a00"/><rect x="903" y="716" width="1" height="28" fill="#8a8a00"/><rect x="907" y="716" width="1" height="28" fill="#8a8a00"/><rect x="911" y="716" width="1" height="28" fill="#8a8a00"/><rect x="915" y="716" width="1" height="28" fill="#8a8a00"/><rect x="915" y="716" width="1" height="28" fill="#8a8a00"/><rect x="931" y="716" width="1" height="28" fill="#8a8a00"/><rect x="947" y="716" width="1" height="28" fill="#8a8a00"/><rect x="951" y="716" width="1" height="28" fill="#8a8a00"/><rect x="955" y="716" width="1" height="28" fill="#8a8a00"/><rect x="959" y="716" width="1" height="28" fill="#8a8a00"/><rect x="963" y="716" width="1" height="28" fill="#8a8a00"/><rect x="967" y="716" width="1" height="28" fill="#8a8a00"/><rect x="971" y="716" width="1" height="28" fill="#8a8a00"/><rect x="975" y="716" width="1" height="28" fill="#8a8a00"/><rect x="979" y="716" width="1" height="28" fill="#8a8a00"/><rect x="983" y="716" width="1" height="28" fill="#8a8a00"/><rect x="987" y="716" width="1" height="28" fill="#8a8a00"/><rect x="991" y="716" width="1" height="28" fill="#8a8a00"/><rect x="995" y="716" width="1" height="28" fill="#8a8a00"/><rect x="999" y="716" width="1" height="28" fill="#8a8a00"/><rect x="1003" y="716" width="1" height="28" fill="#8a8a00"/><rect x="1007" y="716" width="1" height="28" fill="#8a8a00"/><rect x="1023" y="716" width="1" height="28" fill="#8a8a00"/><rect x="1027" y="716" width="1" height="28" fill="#8a8a00"/><rect x="1035" y="716" width="1" height="28" fill="#8a8a00"/><rect x="1039" y="716" width="1" height="28" fill="#8a8a00"/><rect x="1043" y="716" width="1" height="28" fill="#8a8a00"/><rect x="1047" y="716" width="1" height="28" fill="#8a8a00"/><rect x="1051" y="716" width="1" height="28" fill="#8a8a00"/><rect x="1055" y="716" width="1" height="28" fill="#8a8a00"/><rect x="1059" y="716" width="1" height="28" fill="#8a8a00"/><rect x="1063" y="716" width="1" height="28" fill="#8a8a00"/><rect x="1067" y="716" width="1" height="28" fill="#8a8a00"/><rect x="1071" y="716" width="1" height="28" fill="#8a8a00"/><rect x="1075" y="716" width="1" height="28" fill="#8a8a00"/><rect x="1079" y="716" width="1" height="28" fill="#8a8a00"/><rect x="1083" y="716" width="1" height="28" fill="#8a8a00"/><rect x="1087" y="716" width="1" height="28" fill="#8a8a00"/><rect x="1099" y="716" width="1" height="28" fill="#8a8a00"/><rect x="1103" y="716" width="1" height="28" fill="#8a8a00"/><rect x="1107" y="716" width="1" height="28" fill="#8a8a00"/><rect x="1111" y="716" width="1" height="28" fill="#8a8a00"/><rect x="1115" y="716" width="1" height="28" fill="#8a8a00"/><rect x="1119" y="716" width="1" height="28" fill="#8a8a00"/><rect x="1123" y="716" width="1" height="28" fill="#8a8a00"/><rect x="1127" y="716" width="1" height="28" fill="#8a8a00"/><rect x="1131" y="716" width="1" height="28" fill="#8a8a00"/><rect x="1135" y="716" width="1" height="28" fill="#8a8a00"/><rect x="1139" y="716" width="1" height="28" fill="#8a8a00"/><rect x="1163" y="716" width="1" height="28" fill="#8a8a00"/><rect x="1167" y="716" width="1" height="28" fill="#8a8a00"/><rect x="1171" y="716" width="1" height="28" fill="#8a8a00"/><rect x="1175" y="716" width="1" height="28" fill="#8a8a00"/><rect x="1179" y="716" width="1" height="28" fill="#8a8a00"/><rect x="1183" y="716" width="1" height="28" fill="#8a8a00"/><rect x="1187" y="716" width="1" height="28" fill="#8a8a00"/><rect x="1191" y="716" width="1" height="28" fill="#8a8a00"/><rect x="1195" y="716" width="1" height="28" fill="#8a8a00"/><rect x="1199" y="716" width="1" height="28" fill="#8a8a00"/><rect x="1203" y="716" width="1" height="28" fill="#8a8a00"/><rect x="1207" y="716" width="1" height="28" fill="#8a8a00"/><rect x="1211" y="716" width="1" height="28" fill="#8a8a00"/><rect x="1215" y="716" width="1" height="28" fill="#8a8a00"/><rect x="1219" y="716" width="1" height="28" fill="#8a8a00"/><rect x="1223" y="716" width="1" height="28" fill="#8a8a00"/><rect x="1227" y="716" width="1" height="28" fill="#8a8a00"/><rect x="1231" y="716" width="1" height="28" fill="#8a8a00"/><rect x="1235" y="716" width="1" height="28" fill="#8a8a00"/><rect x="1239" y="716" width="1" height="28" fill="#8a8a00"/><rect x="1335" y="716" width="1" height="28" fill="#8a8a00"/><rect x="1359" y="716" width="1" height="28" fill="#8a8a00"/><rect x="1471" y="716" width="1" height="28" fill="#8a8a00"/><rect x="1719" y="716" width="1" height="28" fill="#8a8a00"/><rect x="1762" y="716" width="1" height="28" fill="#8a8a00"/><rect x="1763" y="716" width="1" height="28" fill="#8a8a00"/><rect x="1764" y="716" width="1" height="28" fill="#8a8a00"/><rect x="1765" y="716" width="1" height="28" fill="#8a8a00"/><rect x="1766" y="716" width="1" height="28" fill="#8a8a00"/><rect x="1769" y="716" width="1" height="28" fill="#8a8a00"/><rect x="187" y="716" width="1.5" height="28" fill="#19e6f0"/><rect x="213" y="716" width="1.5" height="28" fill="#19e6f0"/><rect x="548" y="716" width="1.5" height="28" fill="#19e6f0"/></svg>
<div style="left:78px;top:744px;width:1824px;height:10px;background:#333"></div>
<div style="left:78px;top:744px;width:920px;height:10px;background:#585858"></div>
<div style="left:79px;top:745px;width:12px;height:9px;background:#3c3c3c"></div>
<div style="left:82px;top:747px;width:6px;height:6px;background:#5c5c5c"></div>
<div style="left:1902px;top:744px;width:16px;height:11px;background:#3c3c3c"></div>
<div style="left:1906px;top:746px;width:8px;height:7px;background:#5c5c5c"></div>
<div style="left:76px;top:755px;width:1844px;height:246px;background:#333"></div>
<div style="left:78px;top:755px;width:1823px;height:244px;background:#2a2a2a"></div>
<div class="t" style="left:101px;top:759px;color:#d0d0d0">54:SYS_fstat</div>
<div class="t" style="left:1415px;top:759px;color:#d0d0d0;font-size:14.4px">2022/11/17 11:00:04.098</div>
<div class="t" style="left:1614px;top:759px;color:#d0d0d0">0.020 ms</div>
<div class="t" style="left:1696px;top:759px;color:#d0d0d0">0</div>
<div class="t" style="left:1817px;top:759px;color:#d0d0d0">26150</div>
<div class="t" style="left:1891px;top:759px;color:#d0d0d0">1</div>
<div style="left:78px;top:779px;width:1823px;height:1px;background:#b4b4b4"></div>
<div class="t" style="left:101px;top:784px;color:#d0d0d0">55:SYS_mmap</div>
<div class="t" style="left:1415px;top:784px;color:#d0d0d0;font-size:14.4px">2022/11/17 11:00:04.098</div>
<div class="t" style="left:1614px;top:784px;color:#d0d0d0">0.141 ms</div>
<div class="t" style="left:1696px;top:784px;color:#d0d0d0">0x7ffff6769000</div>
<div class="t" style="left:1817px;top:784px;color:#d0d0d0">26150</div>
<div class="t" style="left:1891px;top:784px;color:#d0d0d0">1</div>
<div style="left:78px;top:804px;width:1823px;height:1px;background:#b4b4b4"></div>
<div style="left:78px;top:805px;width:1823px;height:66px;background:#0081ff"></div>
<div class="t" style="left:101px;top:809px;color:#ffffff">56:SYS_mmap</div>
<div class="t" style="left:1415px;top:809px;color:#ffffff;font-size:14.4px">2022/11/17 11:00:04.099</div>
<div class="t" style="left:1614px;top:809px;color:#ffffff">0.150 ms</div>
<div class="t" style="left:1696px;top:809px;color:#ffffff">0x7ffff676f000</div>
<div class="t" style="left:1817px;top:809px;color:#ffffff">26150</div>
<div class="t" style="left:1891px;top:809px;color:#ffffff">1</div>
<div style="left:78px;top:870px;width:1823px;height:1px;background:#b4b4b4"></div>
<div class="t" style="left:101px;top:875px;color:#d0d0d0">57:SYS_mmap</div>
<div class="t" style="left:1415px;top:875px;color:#d0d0d0;font-size:14.4px">2022/11/17 11:00:04.099</div>
<div class="t" style="left:1614px;top:875px;color:#d0d0d0">0.122 ms</div>
<div class="t" style="left:1696px;top:875px;color:#d0d0d0">0x7ffff677e000</div>
<div class="t" style="left:1817px;top:875px;color:#d0d0d0">26150</div>
<div class="t" style="left:1891px;top:875px;color:#d0d0d0">1</div>
<div style="left:78px;top:895px;width:1823px;height:1px;background:#b4b4b4"></div>
<div class="t" style="left:101px;top:900px;color:#d0d0d0">58:SYS_mmap</div>
<div class="t" style="left:1415px;top:900px;color:#d0d0d0;font-size:14.4px">2022/11/17 11:00:04.099</div>
<div class="t" style="left:1614px;top:900px;color:#d0d0d0">0.122 ms</div>
<div class="t" style="left:1696px;top:900px;color:#d0d0d0">0x7ffff6784000</div>
<div class="t" style="left:1817px;top:900px;color:#d0d0d0">26150</div>
<div class="t" style="left:1891px;top:900px;color:#d0d0d0">1</div>
<div style="left:78px;top:920px;width:1823px;height:1px;background:#b4b4b4"></div>
<div class="t" style="left:101px;top:925px;color:#d0d0d0">59:SYS_mmap</div>
<div class="t" style="left:1415px;top:925px;color:#d0d0d0;font-size:14.4px">2022/11/17 11:00:04.099</div>
<div class="t" style="left:1614px;top:925px;color:#d0d0d0">0.135 ms</div>
<div class="t" style="left:1696px;top:925px;color:#d0d0d0">0x7ffff6786000</div>
<div class="t" style="left:1817px;top:925px;color:#d0d0d0">26150</div>
<div class="t" style="left:1891px;top:925px;color:#d0d0d0">1</div>
<div style="left:78px;top:945px;width:1823px;height:1px;background:#b4b4b4"></div>
<div class="t" style="left:101px;top:950px;color:#d0d0d0">60:SYS_close</div>
<div class="t" style="left:1415px;top:950px;color:#d0d0d0;font-size:14.4px">2022/11/17 11:00:04.099</div>
<div class="t" style="left:1614px;top:950px;color:#d0d0d0">0.018 ms</div>
<div class="t" style="left:1696px;top:950px;color:#d0d0d0">0</div>
<div class="t" style="left:1817px;top:950px;color:#d0d0d0">26150</div>
<div class="t" style="left:1891px;top:950px;color:#d0d0d0">1</div>
<div style="left:78px;top:970px;width:1823px;height:1px;background:#b4b4b4"></div>
<div class="t" style="left:101px;top:975px;color:#d0d0d0">61:SYS_openat</div>
<div class="t" style="left:1415px;top:975px;color:#d0d0d0;font-size:14.4px">2022/11/17 11:00:04.099</div>
<div class="t" style="left:1614px;top:975px;color:#d0d0d0">0.023 ms</div>
<div class="t" style="left:1696px;top:975px;color:#d0d0d0">-2</div>
<div class="t" style="left:1817px;top:975px;color:#d0d0d0">26150</div>
<div class="t" style="left:1891px;top:975px;color:#d0d0d0">1</div>
<div style="left:78px;top:995px;width:1823px;height:1px;background:#b4b4b4"></div>
<div style="left:1901px;top:755px;width:17px;height:244px;background:#333"></div>
<div style="left:1901px;top:755px;width:16px;height:16px;background:#3c3c3c"></div>
<div style="left:1904px;top:758px;width:10px;height:10px;background:#2c2c2c"></div>
<div style="left:1906px;top:760px;width:6px;height:6px;background:#5c5c5c"></div>
<div style="left:1901px;top:774px;width:16px;height:16px;background:#585858"></div>
<div style="left:1901px;top:983px;width:16px;height:16px;background:#3c3c3c"></div>
<div style="left:1904px;top:986px;width:10px;height:10px;background:#2c2c2c"></div>
<div style="left:1906px;top:988px;width:6px;height:6px;background:#5c5c5c"></div>
<div style="left:659px;top:194px;width:583px;height:464px;border-radius:5px;box-shadow:0 4px 50px 10px rgba(0,0,0,0.5);background:#3b3b3b;overflow:hidden"><div style="left:0;top:0;width:583px;height:24px;background:#fff"></div></div>
<div class="t" style="left:659px;top:197px;width:583px;text-align:center;color:#303030">事件过滤器.</div>
<svg style="left:0;top:0" width="1300" height="700"><path d="M1218 202l8.4 8.3M1226.4 202l-8.4 8.3" stroke="#303030" stroke-width="1.2"/></svg>
<div style="left:670px;top:230px;width:561px;height:190px;background:#2a2a2a;border:1px solid #333"></div>
<div style="left:670px;top:230px;width:544px;height:26px;background:#4b4e51"></div>
<div style="left:1213px;top:230px;width:1px;height:26px;background:#8a8a8a"></div>
<div class="t" style="left:671px;top:234px;color:#d0d0d0">事件列表</div>
<div style="left:1214px;top:230px;width:16px;height:190px;background:#333"></div>
<div style="left:1214px;top:230px;width:16px;height:16px;background:#3c3c3c"></div>
<div style="left:1217px;top:233px;width:10px;height:10px;background:#2c2c2c"></div>
<div style="left:1219px;top:235px;width:6px;height:6px;background:#5c5c5c"></div>
<div style="left:1214px;top:246px;width:16px;height:44px;background:#585858"></div>
<div style="left:1214px;top:404px;width:16px;height:16px;background:#3c3c3c"></div>
<div style="left:1217px;top:407px;width:10px;height:10px;background:#2c2c2c"></div>
<div style="left:1219px;top:409px;width:6px;height:6px;background:#5c5c5c"></div>
<svg style="left:0;top:0" width="1300" height="700"><path d="M676.5 265.5h9l-4.5 4.5z" fill="#9a9a9a"/></svg>
<div style="left:670px;top:256px;width:544px;height:164px;overflow:hidden"><div style="left:-670px;top:-256px;width:1300px;height:700px"><div class="t" style="left:694px;top:258px;color:#d0d0d0">系统调用过滤器</div><div style="left:714px;top:282px;width:14px;height:14px;border:1px solid #202020;background:#2d2d2d"></div><svg style="left:0;top:0" width="800" height="300"><path d="M717.5 288.5l2.6 4.6 4.6-8.6" fill="none" stroke="#c4c4c4" stroke-width="1.7"/></svg><div class="t" style="left:734px;top:280px;color:#d0d0d0">desc</div><div style="left:714px;top:304px;width:14px;height:14px;border:1px solid #202020;background:#2d2d2d"></div><div class="t" style="left:734px;top:302px;color:#d0d0d0">file</div><div style="left:714px;top:326px;width:14px;height:14px;border:1px solid #202020;background:#2d2d2d"></div><div class="t" style="left:734px;top:324px;color:#d0d0d0">memory</div><div style="left:714px;top:348px;width:14px;height:14px;border:1px solid #202020;background:#2d2d2d"></div><div class="t" style="left:734px;top:346px;color:#d0d0d0">process</div><div style="left:714px;top:370px;width:14px;height:14px;border:1px solid #202020;background:#2d2d2d"></div><div class="t" style="left:734px;top:368px;color:#d0d0d0">signal</div><div style="left:714px;top:392px;width:14px;height:14px;border:1px solid #202020;background:#2d2d2d"></div><div class="t" style="left:734px;top:390px;color:#d0d0d0">ipc</div><div style="left:714px;top:414px;width:14px;height:14px;border:1px solid #202020;background:#2d2d2d"></div><div class="t" style="left:734px;top:412px;color:#d0d0d0">network</div></div></div>
<div class="t" style="left:670px;top:429px;color:#d0d0d0">仅记录事件发生的线程:</div>
<div style="left:1106px;top:427px;width:14px;height:14px;background:#3d3d3d;border:1px solid #2a2a2a"></div>
<svg style="left:0;top:0" width="1300" height="700"><path d="M1109.5 432.5l2.6 4.6 4.6-8.6" fill="none" stroke="#c4c4c4" stroke-width="1.7"/></svg>
<div class="t" style="left:670px;top:459px;color:#d0d0d0">记录堆区的大小（默认值为0，以KB为单位）：</div>
<div style="left:1106px;top:455px;width:125px;height:25px;background:#2b2b2b"></div>
<div class="t" style="left:1109px;top:459px;color:#e0e0e0">0</div>
<div class="t" style="left:670px;top:491px;color:#d0d0d0">记录栈区的大小（默认值为32，以KB为单位）：</div>
<div style="left:1106px;top:487px;width:125px;height:25px;background:#2b2b2b"></div>
<div class="t" style="left:1109px;top:491px;color:#e0e0e0">32</div>
<div class="t" style="left:670px;top:523px;color:#d0d0d0">记录系统调用参数的大小（默认值为256，单位字节）：</div>
<div style="left:1106px;top:519px;width:125px;height:25px;background:#2b2b2b"></div>
<div class="t" style="left:1109px;top:523px;color:#e0e0e0">256</div>
<div class="t" style="left:670px;top:555px;color:#d0d0d0">记录指定的全局变量（格式：[*]var1+size1[，[*]var2+size2，⋯]）：</div>
<div style="left:1106px;top:551px;width:125px;height:25px;background:#2b2b2b"></div>
<div class="t" style="left:670px;top:587px;color:#d0d0d0">执行指定函数后开始记录（c++mangle名称）：</div>
<div style="left:1106px;top:583px;width:125px;height:25px;background:#2b2b2b"></div>
<div style="left:1075px;top:615px;width:75px;height:32px;background:#4b4e51;border-radius:4px"></div>
<div style="left:1156px;top:615px;width:75px;height:32px;background:#4b4e51;border-radius:4px"></div>
<div class="t" style="left:1112px;top:622px;color:#e0e0e0">OK</div>
<div class="t" style="left:1181px;top:622px;color:#e0e0e0">Cancel</div>
<svg style="left:0;top:0" width="1300" height="700"><path d="M1096 631l2.5 3 5-6" fill="none" stroke="#5a6470" stroke-width="1"/><path d="M1166.5 628.5l4 4M1170.5 628.5l-4 4" stroke="#5a6470" stroke-width="1"/></svg>
</body></html>
